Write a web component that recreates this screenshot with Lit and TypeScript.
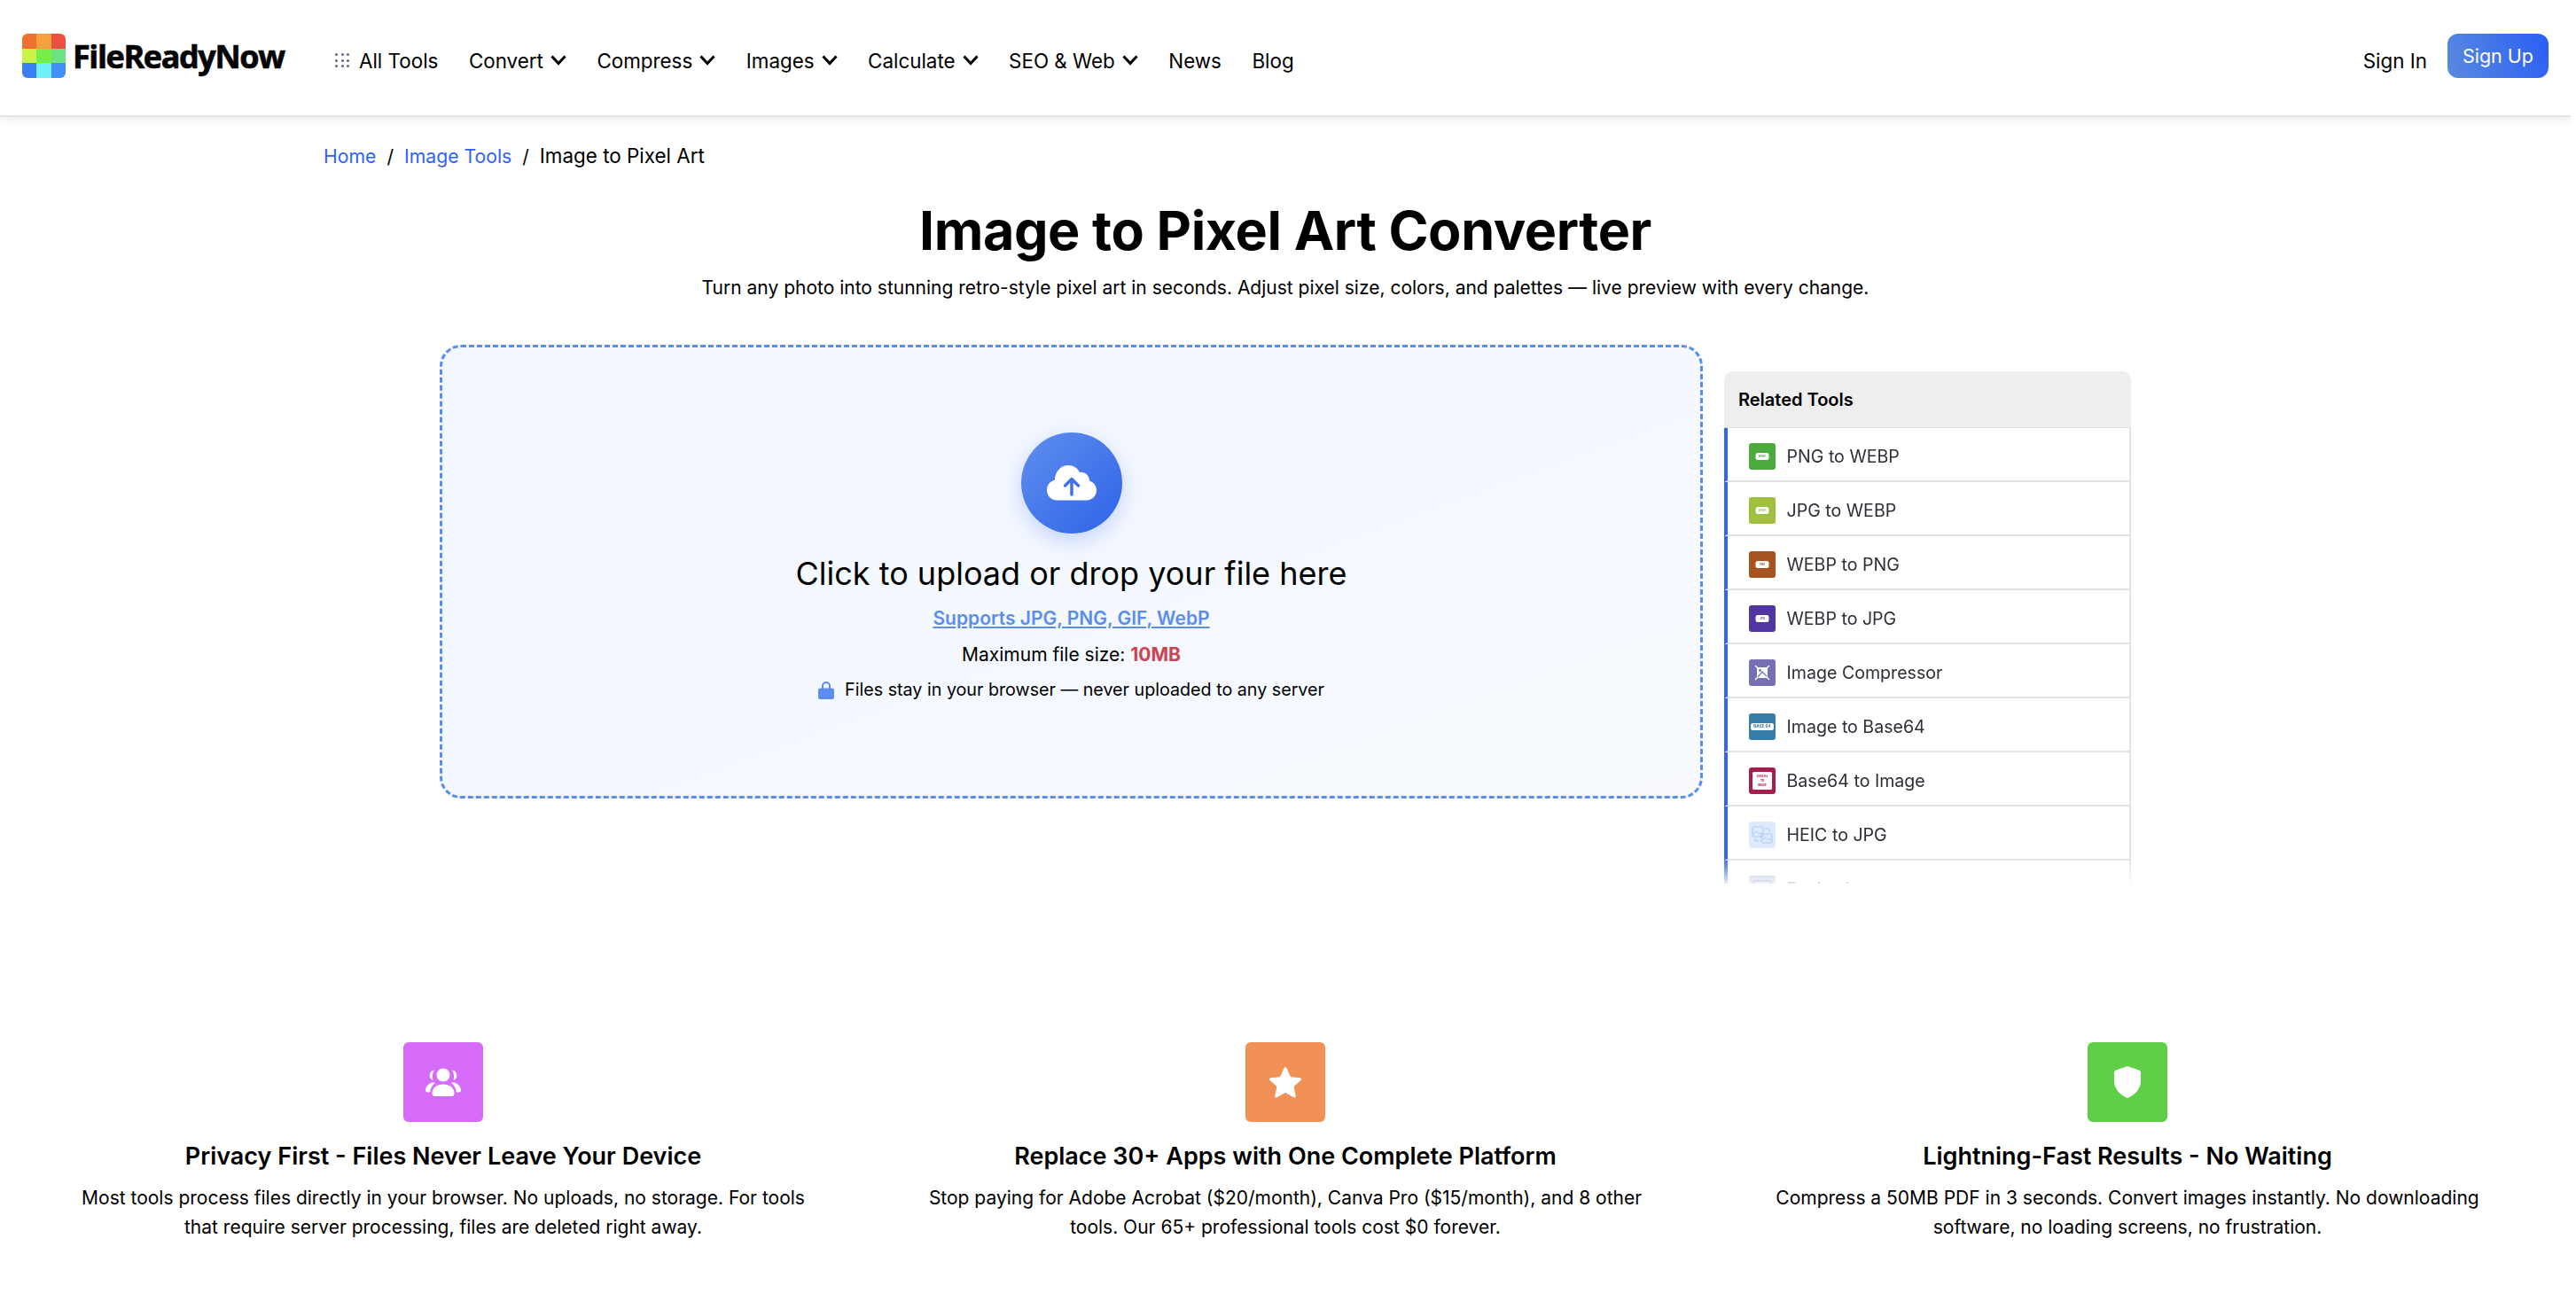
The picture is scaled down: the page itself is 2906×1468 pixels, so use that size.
import { LitElement, html, css, svg } from 'lit';
import { customElement } from 'lit/decorators.js';

const navItems = [
  { label: 'Convert', drop: true },
  { label: 'Compress', drop: true },
  { label: 'Images', drop: true },
  { label: 'Calculate', drop: true },
  { label: 'SEO & Web', drop: true },
  { label: 'News', drop: false },
  { label: 'Blog', drop: false },
];

const logoColors = ['#f0702f', '#f5a03c', '#ee5040', '#c8f545', '#74f048', '#6ee383', '#3a80f2', '#70f0fb', '#4090f6'];

// small pill icon used by most of the converter rows
const pill = (text: string, color: string, w = 15) => svg`
  <rect x=${15 - w / 2} y="11" width=${w} height="8" rx="2.5" fill="#fff"></rect>
  <text x="15" y="16.2" text-anchor="middle" font-size=${w > 20 ? 4.6 : 2.8} font-weight="700" font-family="Inter, sans-serif" fill=${color}>${text}</text>`;

const tools = [
  { name: 'PNG to WEBP', bg: '#4cab3c', icon: pill('WEBP', '#4cab3c') },
  { name: 'JPG to WEBP', bg: '#9fc03c', icon: pill('WEBP', '#9fc03c') },
  { name: 'WEBP to PNG', bg: '#a6531f', icon: pill('PNG', '#a6531f') },
  { name: 'WEBP to JPG', bg: '#5135a0', icon: pill('JPG', '#5135a0') },
  {
    name: 'Image Compressor',
    bg: '#7570b3',
    icon: svg`
      <rect x="9" y="9" width="12" height="12" rx="1" fill="#fff"></rect>
      <circle cx="12.5" cy="12.5" r="1.4" fill="#7570b3"></circle>
      <path d="M10 20l5-6 5 5" fill="none" stroke="#7570b3" stroke-width="1.2"></path>
      <path d="M7 7l3 3M23 7l-3 3M7 23l3-3M23 23l-3-3" stroke="#fff" stroke-width="1.4"></path>`,
  },
  { name: 'Image to Base64', bg: '#367da9', icon: pill('BASE 64', '#367da9', 26) },
  {
    name: 'Base64 to Image',
    bg: '#a61e4d',
    icon: svg`
      <rect x="4" y="5" width="22" height="20" rx="1.5" fill="#fff"></rect>
      <g font-size="3" font-weight="700" font-family="Inter, sans-serif" fill="#a61e4d" text-anchor="middle">
        <text x="15" y="10.8">BASE 64</text>
        <text x="15" y="15.9">TO</text>
        <text x="15" y="21">IMAGE</text>
      </g>`,
  },
  {
    name: 'HEIC to JPG',
    bg: '#dfeafe',
    icon: svg`
      <g fill="none" stroke="#a8c8f8" stroke-width="1">
        <rect x="4" y="6" width="12" height="11" rx="1"></rect>
        <path d="M4 15l4-4 3 3 2-2 3 3"></path>
        <rect x="14" y="14" width="12" height="10" rx="1"></rect>
        <path d="M14 22l4-4 3 3 2-2 3 3"></path>
        <path d="M18 8h4a1 1 0 0 1 1 1v3M7 19v2a1 1 0 0 0 1 1h3"></path>
      </g>`,
  },
  {
    name: 'Resize Image',
    bg: '#a9b6d8',
    icon: svg`<rect x="5" y="6" width="20" height="14" rx="1" fill="none" stroke="#4a5a8c" stroke-width="1.4"></rect>`,
  },
];

const features = [
  {
    title: 'Privacy First - Files Never Leave Your Device',
    text: 'Most tools process files directly in your browser. No uploads, no storage. For tools that require server processing, files are deleted right away.',
    bg: '#d66bf7',
    icon: html`<svg width="40" height="32" viewBox="0 0 40 32" fill="#fff">
      <circle cx="20" cy="8" r="7.5"></circle>
      <path d="M20 18.500c7.500 0 12.500 4 12.500 10.500 0 1.700-1.300 3-3 3h-19c-1.700 0-3-1.300-3-3 0-6.500 5-10.500 12.500-10.500z"></path>
      <g id="side">
        <path d="M10 2.500a6 6 0 0 0-1.500 11.500C7.300 10 7.800 5.500 10 2.500z"></path>
        <path d="M7.500 16.500C3 17.800 0 21.500 0 25.500c0 1.300 1 2 2.200 2h3c.3-4.500 2.300-8 5.800-10.500-1-.6-2.400-.8-3.500-.5z"></path>
      </g>
      <g transform="matrix(-1 0 0 1 40 0)">
        <path d="M10 2.500a6 6 0 0 0-1.500 11.500C7.300 10 7.800 5.500 10 2.500z"></path>
        <path d="M7.500 16.500C3 17.800 0 21.500 0 25.500c0 1.300 1 2 2.200 2h3c.3-4.500 2.300-8 5.800-10.500-1-.6-2.400-.8-3.500-.5z"></path>
      </g>
    </svg>`,
  },
  {
    title: 'Replace 30+ Apps with One Complete Platform',
    text: 'Stop paying for Adobe Acrobat ($20/month), Canva Pro ($15/month), and 8 other tools. Our 65+ professional tools cost $0 forever.',
    bg: '#f29156',
    icon: html`<svg width="38" height="36" viewBox="0 0 38 36" fill="#fff" stroke="#fff" stroke-width="3" stroke-linejoin="round">
      <path d="M19 2.500l5 11 11.500 1.300-8.500 7.700 2.300 11.500L19 28.300 8.700 34l2.300-11.500L2.500 14.800 14 13.500z"></path>
    </svg>`,
  },
  {
    title: 'Lightning-Fast Results - No Waiting',
    text: 'Compress a 50MB PDF in 3 seconds. Convert images instantly. No downloading software, no loading screens, no frustration.',
    bg: '#5fcf48',
    icon: html`<svg width="30" height="36" viewBox="0 0 30 36" fill="#fff">
      <path d="M15 0l13 4.500c1.300.5 2 1.500 2 3V17c0 8-6 15.500-15 19C6 32.500 0 25 0 17V7.500c0-1.500.7-2.500 2-3z"></path>
    </svg>`,
  },
];

@customElement('app-root')
export class AppRoot extends LitElement {
  static styles = css`
    :host {
      display: block;
      width: 2900px;
      height: 1468px;
      overflow: hidden;
      background: #fff;
      color: #000;
      font-family: Inter, 'Liberation Sans', sans-serif;
    }
    a {
      color: inherit;
      text-decoration: none;
    }

    /* top bar */
    .topbar {
      box-sizing: border-box;
      height: 130px;
      display: flex;
      align-items: center;
      padding: 6px 25px 0;
      box-shadow: 0 2px 0 #e4e5ea, 0 4px 10px rgba(40, 40, 70, 0.1);
      position: relative;
    }
    .brand {
      display: flex;
      align-items: center;
      gap: 8px;
      margin-top: -10px;
      width: 353px;
    }
    .logo-grid {
      width: 49px;
      height: 50px;
      border-radius: 6px;
      overflow: hidden;
      display: grid;
      grid-template-columns: repeat(3, 1fr);
      grid-template-rows: repeat(3, 1fr);
    }
    .wordmark {
      font-family: 'Open Sans', sans-serif;
      font-weight: 700;
      font-size: 36px;
      letter-spacing: -1.4px;
      color: #050505;
      -webkit-text-stroke: 0.7px #050505;
    }
    .nav {
      display: flex;
      align-items: center;
      gap: 34.5px;
      font-size: 22.4px;
      flex: 1;
    }
    .nav-item {
      display: flex;
      align-items: center;
      gap: 8px;
    }
    .dots {
      display: grid;
      grid-template-columns: repeat(3, 3px);
      gap: 3.500px;
      margin-right: 3px;
    }
    .dots i {
      width: 3px;
      height: 3px;
      border-radius: 50%;
      background: #5a6488;
    }
    .auth {
      display: flex;
      align-items: center;
      gap: 23px;
      font-size: 22.4px;
    }
    .signup {
      width: 114px;
      height: 50px;
      border-radius: 12px;
      background: linear-gradient(70deg, #5a8ade, #2a5ef5);
      color: #fff;
      font-size: 21.5px;
      display: flex;
      align-items: center;
      justify-content: center;
      margin-top: -10px;
    }

    /* page head */
    .crumbs {
      display: flex;
      gap: 12px;
      padding: 31px 0 0 365px;
      font-size: 21.2px;
      line-height: 30px;
    }
    .crumbs a {
      color: #2f5fff;
    }
    .crumbs .here {
      font-size: 22.4px;
    }
    h1 {
      margin: 31px 0 0;
      text-align: center;
      font-size: 61px;
      line-height: 76px;
      font-weight: 700;
      letter-spacing: -0.4px;
    }
    .lead {
      margin: 12px 0 0;
      text-align: center;
      font-size: 21px;
      line-height: 30px;
    }

    /* tool area */
    .work {
      width: 1908px;
      margin: 49px auto 0;
      display: flex;
      gap: 24px;
      align-items: flex-start;
    }
    .drop {
      box-sizing: border-box;
      width: 1425px;
      height: 512px;
      border: 3px dashed #5b8def;
      border-radius: 24px;
      background: linear-gradient(160deg, #f1f6ff, #f8faff);
      display: flex;
      flex-direction: column;
      align-items: center;
      padding-top: 96px;
    }
    .up-circle {
      width: 114px;
      height: 114px;
      border-radius: 50%;
      background: linear-gradient(135deg, #5f8fee, #2f62e8);
      box-shadow: 0 8px 24px rgba(70, 120, 240, 0.28);
      display: flex;
      align-items: center;
      justify-content: center;
    }
    .drop h2 {
      margin: 23px 0 0;
      font-size: 36px;
      line-height: 44px;
      font-weight: 400;
    }
    .formats {
      margin-top: 14px;
      font-size: 21px;
      line-height: 30px;
      font-weight: 600;
      color: #5b8def;
      text-decoration: underline;
    }
    .limit {
      margin-top: 11px;
      font-size: 21px;
      line-height: 30px;
    }
    .limit b {
      color: #cb444f;
      font-weight: 700;
    }
    .private {
      margin-top: 9px;
      display: flex;
      align-items: center;
      gap: 12px;
      font-size: 19.7px;
      line-height: 30px;
    }

    /* related tools */
    .side {
      box-sizing: border-box;
      width: 459px;
      height: 578px;
      margin-top: 30px;
      overflow: hidden;
      -webkit-mask-image: linear-gradient(to bottom, #000 95%, rgba(0, 0, 0, 0.15));
      mask-image: linear-gradient(to bottom, #000 95%, rgba(0, 0, 0, 0.15));
    }
    .side-head {
      height: 64px;
      background: #eee;
      border-radius: 10px 10px 0 0;
      border-bottom: 1px solid #e0e1e6;
      box-sizing: border-box;
      padding: 0 16px;
      display: flex;
      align-items: center;
      font-size: 20px;
      font-weight: 600;
    }
    .row {
      box-sizing: border-box;
      height: 61px;
      display: flex;
      align-items: center;
      gap: 12.5px;
      padding: 5px 0 0 24px;
      border-left: 4px solid #2f66f5;
      border-right: 2px solid #e2e3e8;
      border-bottom: 2px solid #e2e3e8;
      font-size: 19.6px;
      color: #2c2f36;
    }
    .mini {
      width: 30px;
      height: 30px;
      border-radius: 3px;
      flex: none;
      display: block;
    }

    /* benefits */
    .benefits {
      display: grid;
      grid-template-columns: repeat(3, 1fr);
      gap: 50px;
      padding: 0 50px;
      margin-top: 179px;
      text-align: center;
    }
    .tile {
      width: 90px;
      height: 90px;
      border-radius: 6px;
      margin: 0 auto;
      display: flex;
      align-items: center;
      justify-content: center;
    }
    .benefit h3 {
      margin: 21px 0 0;
      font-size: 27px;
      line-height: 36px;
      font-weight: 600;
    }
    .benefit p {
      margin: 12px auto 0;
      max-width: 840px;
      font-size: 21px;
      line-height: 33px;
    }
  `;

  private chevron() {
    return html`<svg width="18" height="12" viewBox="0 0 18 12" fill="none" stroke="#000" stroke-width="3">
      <path d="M1.500 1.500L9 9.500l7.500-8"></path>
    </svg>`;
  }

  render() {
    return html`
      <header class="topbar">
        <a class="brand" href="#">
          <span class="logo-grid">${logoColors.map((c) => html`<span style="background:${c}"></span>`)}</span>
          <span class="wordmark">FileReadyNow</span>
        </a>
        <nav class="nav">
          <a class="nav-item" href="#">
            <span class="dots">${Array.from({ length: 9 }, () => html`<i></i>`)}</span>
            All Tools
          </a>
          ${navItems.map(
            (n) => html`<a class="nav-item" href="#">${n.label}${n.drop ? this.chevron() : ''}</a>`
          )}
        </nav>
        <div class="auth">
          <a href="#">Sign In</a>
          <a class="signup" href="#">Sign Up</a>
        </div>
      </header>

      <div class="crumbs">
        <a href="#">Home</a><span>/</span><a href="#">Image Tools</a><span>/</span
        ><span class="here">Image to Pixel Art</span>
      </div>
      <h1>Image to Pixel Art Converter</h1>
      <p class="lead">
        Turn any photo into stunning retro-style pixel art in seconds. Adjust pixel size, colors, and palettes — live
        preview with every change.
      </p>

      <section class="work">
        <div class="drop">
          <div class="up-circle">
            <svg width="56" height="40" viewBox="0 0 56 40">
              <path
                fill="#fff"
                d="M11 39.500C5 39.500 0 34.500 0 28c0-5.500 3.500-10 9-11.500C9 7.500 15.500 0 24 0c6 0 10.500 3 13 8 5.500-1 11 3.500 11 9.500 4.500 1.500 8 5.500 8 10.500 0 6.500-5 11.500-11 11.500z"
              ></path>
              <path
                fill="none"
                stroke="#3f72ec"
                stroke-width="3.500"
                stroke-linecap="round"
                stroke-linejoin="round"
                d="M28 33V16M20.500 23L28 15.500 35.500 23"
              ></path>
            </svg>
          </div>
          <h2>Click to upload or drop your file here</h2>
          <div class="formats">Supports JPG, PNG, GIF, WebP</div>
          <div class="limit">Maximum file size: <b>10MB</b></div>
          <div class="private">
            <svg width="18" height="21" viewBox="0 0 18 21" fill="#5b8def">
              <path d="M4 10V6a5 5 0 0 1 10 0v4h-2V6a3 3 0 0 0-6 0v4z"></path>
              <rect y="8.500" width="18" height="12.500" rx="2.500"></rect>
            </svg>
            <span>Files stay in your browser — never uploaded to any server</span>
          </div>
        </div>

        <aside class="side">
          <div class="side-head">Related Tools</div>
          ${tools.map(
            (t) => html`<a class="row" href="#">
              <svg class="mini" viewBox="0 0 30 30" style="background:${t.bg}">${t.icon}</svg>
              <span>${t.name}</span>
            </a>`
          )}
        </aside>
      </section>

      <section class="benefits">
        ${features.map(
          (f) => html`<div class="benefit">
            <div class="tile" style="background:${f.bg}">${f.icon}</div>
            <h3>${f.title}</h3>
            <p>${f.text}</p>
          </div>`
        )}
      </section>
    `;
  }
}
